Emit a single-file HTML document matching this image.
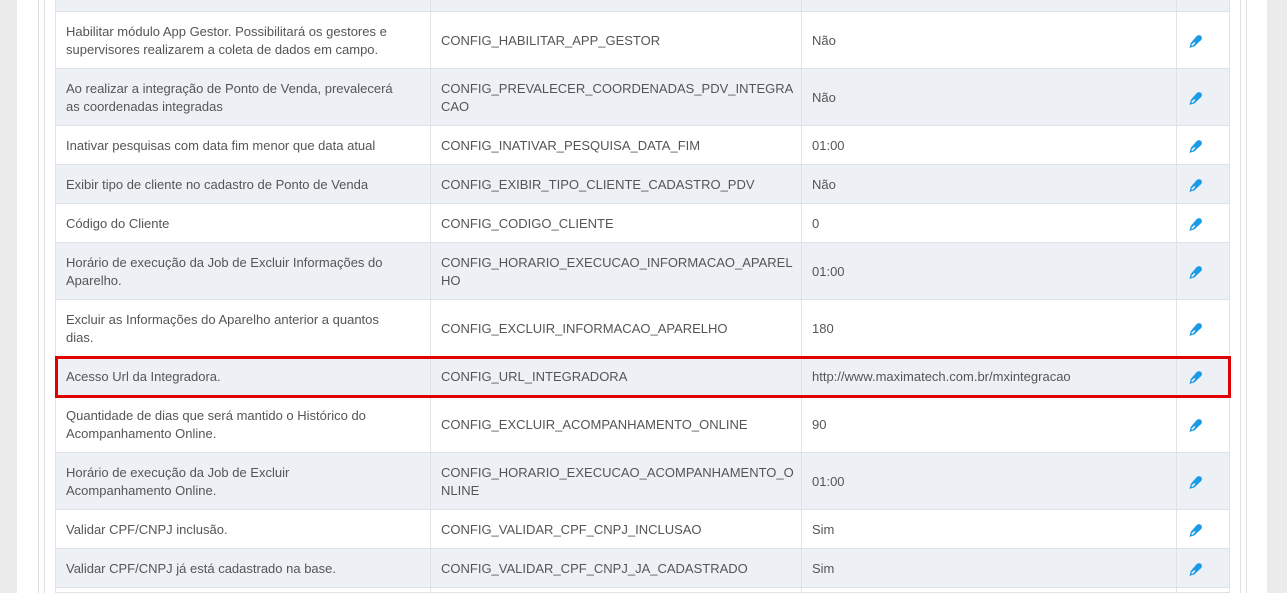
<!DOCTYPE html>
<html><head><style>
*{margin:0;padding:0;box-sizing:border-box}
html,body{width:1287px;height:593px;overflow:hidden}
body{background:#ebebeb;font-family:"Liberation Sans",sans-serif;font-size:13px;color:#555;position:relative}
.panel{position:absolute;left:17px;top:0;width:1250px;height:593px;background:#fff}
.vl{position:absolute;top:0;height:593px;width:1px;background:#e0e0e0}
.row{position:absolute;left:55px;width:1175px;border-left:1px solid #dde3e8;border-bottom:1px solid #dde3e8;display:flex}
.row.g{background:#edf1f5}
.row.w{background:#fff}
.c{border-right:1px solid #dde3e8;padding:2px 10px 0;display:flex;align-items:center;line-height:18px;height:100%;white-space:nowrap}
.c1{width:375px}.c2{width:371px}.c3{width:375px}.c4{width:53px;padding-left:11px}
.red{position:absolute;left:55px;top:356px;width:1176px;height:42px;border:3px solid #e00000}
</style></head><body>
<div class="panel"></div>
<div class="vl" style="left:38px"></div><div class="vl" style="left:44px"></div>
<div class="vl" style="left:1240px"></div><div class="vl" style="left:1246px"></div>
<div id="t"></div>
<script>
const P='<svg width="15" height="15" viewBox="0 0 14 14"><path d="M8.3 1.8Q10.5 0.2 12.3 2Q13.8 4 12.2 5.7L6 11.6L1.3 13L2.7 8.2Z" fill="#1a9be8"/><path d="M3.5 10.7L6.3 7.9" stroke="#fff" stroke-width="1.3"/></svg>';
const rows=[
[-45,57,'g','','','',''],
[12,57,'w','Habilitar módulo App Gestor. Possibilitará os gestores e<br>supervisores realizarem a coleta de dados em campo.','CONFIG_HABILITAR_APP_GESTOR','Não'],
[69,57,'g','Ao realizar a integração de Ponto de Venda, prevalecerá<br>as coordenadas integradas','CONFIG_PREVALECER_COORDENADAS_PDV_INTEGRA<br>CAO','Não'],
[126,39,'w','Inativar pesquisas com data fim menor que data atual','CONFIG_INATIVAR_PESQUISA_DATA_FIM','01:00'],
[165,39,'g','Exibir tipo de cliente no cadastro de Ponto de Venda','CONFIG_EXIBIR_TIPO_CLIENTE_CADASTRO_PDV','Não'],
[204,39,'w','Código do Cliente','CONFIG_CODIGO_CLIENTE','0'],
[243,57,'g','Horário de execução da Job de Excluir Informações do<br>Aparelho.','CONFIG_HORARIO_EXECUCAO_INFORMACAO_APAREL<br>HO','01:00'],
[300,57,'w','Excluir as Informações do Aparelho anterior a quantos<br>dias.','CONFIG_EXCLUIR_INFORMACAO_APARELHO','180'],
[357,39,'g','Acesso Url da Integradora.','CONFIG_URL_INTEGRADORA','http://www.maximatech.com.br/mxintegracao'],
[396,57,'w','Quantidade de dias que será mantido o Histórico do<br>Acompanhamento Online.','CONFIG_EXCLUIR_ACOMPANHAMENTO_ONLINE','90'],
[453,57,'g','Horário de execução da Job de Excluir<br>Acompanhamento Online.','CONFIG_HORARIO_EXECUCAO_ACOMPANHAMENTO_O<br>NLINE','01:00'],
[510,39,'w','Validar CPF/CNPJ inclusão.','CONFIG_VALIDAR_CPF_CNPJ_INCLUSAO','Sim'],
[549,39,'g','Validar CPF/CNPJ já está cadastrado na base.','CONFIG_VALIDAR_CPF_CNPJ_JA_CADASTRADO','Sim'],
[588,5,'w','','','']];
let h='';
for(const r of rows){h+=`<div class="row ${r[2]}" style="top:${r[0]}px;height:${r[1]}px"><div class="c c1"><div>${r[3]}</div></div><div class="c c2"><div>${r[4]}</div></div><div class="c c3">${r[5]}</div><div class="c c4">${r[3]?P:''}</div></div>`;}
h+='<div class="red"></div>';
document.getElementById('t').innerHTML=h;
</script>
</body></html>
